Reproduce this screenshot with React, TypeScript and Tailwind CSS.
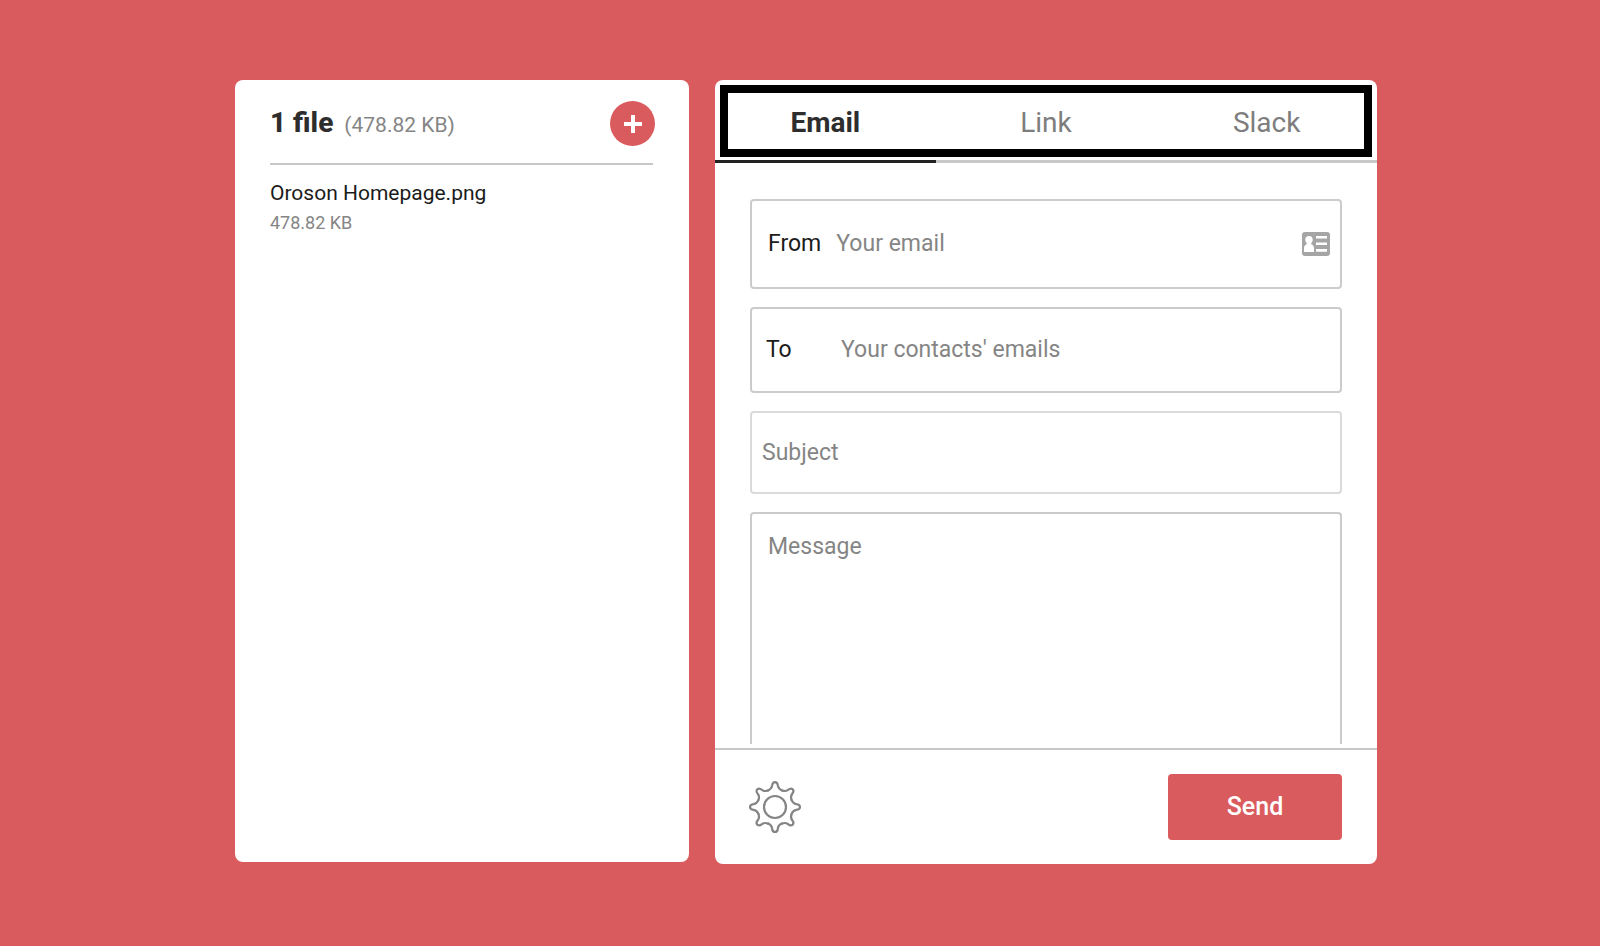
import React from 'react';

const teeth = [0, 45, 90, 135, 180, 225, 270, 315];

const GearIcon: React.FC = () => (
  <svg viewBox="-27 -27 54 54" className="h-[54px] w-[54px]" fill="none" stroke="#858585" strokeWidth="2.2" strokeLinecap="round" aria-hidden="true">
    <circle r="11" />
    {teeth.map((angle) => (
      <path
        key={angle}
        transform={`rotate(${angle})`}
        d="M-6.9 -16.6C-4.6 -17.6 -3.2 -19 -2.9 -21.3C-2.5 -26.2 2.5 -26.2 2.9 -21.3C3.2 -19 4.6 -17.6 6.9 -16.6"
      />
    ))}
  </svg>
);

const ContactIcon: React.FC = () => (
  <svg viewBox="0 0 28 24" className="h-6 w-7" aria-hidden="true">
    <rect width="28" height="24" rx="3" fill="#a5a5a5" />
    <path
      d="M7 4a3.7 3.7 0 0 1 3.7 3.8c0 1.5-.6 2.7-1.5 3.5v1c1.9.6 2.8 2 2.8 4.200V20H2v-3.500c0-2.200.9-3.600 2.800-4.200v-1c-.9-.8-1.500-2-1.500-3.500A3.700 3.700 0 0 1 7 4zM14 4h11v2.500H14zM14 10.500h11V13H14zM14 17h11v2.800H14z"
      fill="#fff"
    />
  </svg>
);

const FilePanel: React.FC = () => {
  return (
    <section className="mb-0.5 rounded-lg bg-white pt-[21px] pr-9 pl-[35px]">
      <div className="flex items-center justify-between border-b-2 border-[#c8c8c8] pb-[17px]">
        <h1 className="flex items-baseline gap-[11px] pt-0.5 whitespace-nowrap">
          <span className="text-[28px] leading-8 font-extrabold text-[#2d2d2d]">1 file</span>
          <span className="text-[21px] text-[#858585]">(478.82 KB)</span>
        </h1>
        <button type="button" aria-label="Add file" className="-mr-0.5 flex h-[45px] w-[45px] items-center justify-center rounded-full bg-[#da5b5d]">
          <svg viewBox="0 0 18 18" className="h-[18px] w-[18px]" stroke="#fff" strokeWidth="4" aria-hidden="true">
            <path d="M9 0V18M0 9H18" />
          </svg>
        </button>
      </div>
      <ul className="pt-3">
        <li>
          <div className="text-[21px] leading-8 text-[#1b1b1b]">Oroson Homepage.png</div>
          <div className="text-[18px] leading-7 text-[#858585]">478.82 KB</div>
        </li>
      </ul>
    </section>
  );
};

const SendPanel: React.FC = () => {
  return (
    <form className="flex flex-col overflow-hidden rounded-lg bg-white" onSubmit={(e) => e.preventDefault()}>
      <div className="relative">
        <div role="tablist" className="grid grid-cols-3 text-[28px] leading-9 text-[#7d7d7d]">
          <button type="button" role="tab" aria-selected="true" className="border-b-3 border-[#222] pt-[25px] pb-[19px] font-bold text-[#2d2d2d]">Email</button>
          <button type="button" role="tab" aria-selected="false" className="border-b-3 border-[#c8c8c8] pt-[25px] pb-[19px]">Link</button>
          <button type="button" role="tab" aria-selected="false" className="border-b-3 border-[#c8c8c8] pt-[25px] pb-[19px]">Slack</button>
        </div>
        <div className="pointer-events-none absolute inset-x-[5px] top-[5px] bottom-[6px] border-8 border-black" />
      </div>

      <div className="flex grow flex-col gap-[18px] px-[35px] pt-9 pb-1 text-[23px]">
        <div className="flex h-[90px] items-center gap-[15px] rounded border-2 border-[#cbcbcb] pr-2.5 pl-4">
          <label htmlFor="from" className="text-[#1b1b1b]">From</label>
          <input id="from" type="email" placeholder="Your email" className="min-w-0 grow outline-none placeholder:text-[#858585]" />
          <ContactIcon />
        </div>
        <div className="flex h-[86px] items-center rounded border-2 border-[#cbcbcb] px-3.5">
          <label htmlFor="to" className="w-[75px] text-[#1b1b1b]">To</label>
          <input id="to" type="text" placeholder="Your contacts' emails" className="min-w-0 grow outline-none placeholder:text-[#858585]" />
        </div>
        <input type="text" aria-label="Subject" placeholder="Subject" className="h-[83px] rounded border-2 border-[#dadada] px-2.5 outline-none placeholder:text-[#858585]" />
        <textarea aria-label="Message" placeholder="Message" className="min-h-40 grow resize-none rounded-t border-2 border-b-0 border-[#cbcbcb] px-4 pt-4 outline-none placeholder:text-[#858585]" />
      </div>

      <div className="flex items-center justify-between border-t-2 border-[#c8c8c8] px-[35px] py-6">
        <button type="button" aria-label="Settings" className="-ml-0.5">
          <GearIcon />
        </button>
        <button type="submit" className="h-[66px] w-[174px] rounded bg-[#da5b5d] text-[25px] font-medium text-white">Send</button>
      </div>
    </form>
  );
};

const App: React.FC = () => {
  return (
    <main className="flex min-h-screen flex-col bg-[#da5b5d] pt-20 pr-6 pb-[82px] pl-9 font-['Roboto',sans-serif]">
      <div className="mx-auto grid w-full max-w-[1142px] grow grid-cols-[454fr_662fr] gap-[26px]">
        <FilePanel />
        <SendPanel />
      </div>
    </main>
  );
};

export default App;
